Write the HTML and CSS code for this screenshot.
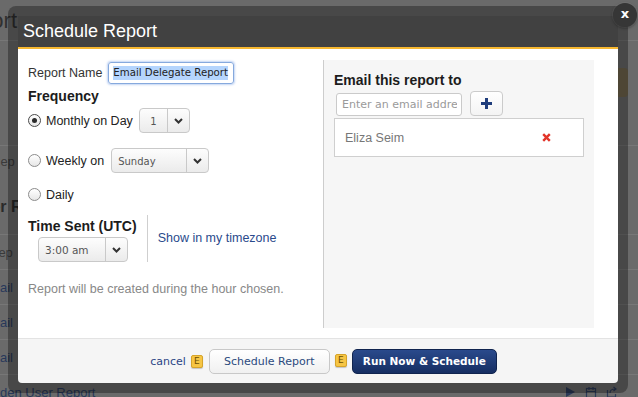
FILE: index.html
```html
<!DOCTYPE html>
<html>
<head>
<meta charset="utf-8">
<title>Schedule Report</title>
<link rel="stylesheet" href="styles.css">
</head>
<body>
<div class="page">
  <div class="p-head"><h1 class="p-title">Report</h1></div>
  <div class="p-bar"><span class="p-btn"></span></div>
  <div class="p-sec">
    <div class="p-sub">Rep</div>
    <h2 class="p-h2">User R</h2>
  </div>
  <div class="p-row"><span class="p-gray">Rep</span></div>
  <div class="p-row"><a class="p-link">Email</a><span class="p-icons"><svg width="12" height="12" viewBox="0 0 12 12"><path d="M2 1 L11 6 L2 11 Z" fill="#2c3a58"/></svg><svg width="12" height="12" viewBox="0 0 12 12"><rect x="1" y="2" width="10" height="9" fill="none" stroke="#2c3a58" stroke-width="1.2"/></svg><svg width="12" height="12" viewBox="0 0 12 12"><rect x="1" y="3" width="9" height="8" fill="none" stroke="#2c3a58" stroke-width="1.2"/></svg></span></div>
  <div class="p-row"><a class="p-link">Email</a><span class="p-icons"><svg width="12" height="12" viewBox="0 0 12 12"><path d="M2 1 L11 6 L2 11 Z" fill="#2c3a58"/></svg><svg width="12" height="12" viewBox="0 0 12 12"><rect x="1" y="2" width="10" height="9" fill="none" stroke="#2c3a58" stroke-width="1.2"/></svg><svg width="12" height="12" viewBox="0 0 12 12"><rect x="1" y="3" width="9" height="8" fill="none" stroke="#2c3a58" stroke-width="1.2"/></svg></span></div>
  <div class="p-row"><a class="p-link">Email</a><span class="p-icons"><svg width="12" height="12" viewBox="0 0 12 12"><path d="M2 1 L11 6 L2 11 Z" fill="#2c3a58"/></svg><svg width="12" height="12" viewBox="0 0 12 12"><rect x="1" y="2" width="10" height="9" fill="none" stroke="#2c3a58" stroke-width="1.2"/></svg><svg width="12" height="12" viewBox="0 0 12 12"><rect x="1" y="3" width="9" height="8" fill="none" stroke="#2c3a58" stroke-width="1.2"/></svg></span></div>
  <div class="p-row"><a class="p-link">Hidden User Report</a><span class="p-icons"><svg width="12" height="12" viewBox="0 0 12 12"><path d="M2 1 L11 6 L2 11 Z" fill="#2c3a58"/></svg><svg width="12" height="12" viewBox="0 0 12 12"><rect x="1.5" y="2.5" width="9" height="9" fill="none" stroke="#2c3a58" stroke-width="1.2"/><path d="M4 1 V4 M8 1 V4 M1.5 5.5 H10.5" stroke="#2c3a58" stroke-width="1.2"/></svg><svg width="12" height="12" viewBox="0 0 12 12"><path d="M1.5 4 V11 H9.5 V8 M4 7 C4 4 6 3 9 3 M7.5 1 L10 3 L7.5 5" fill="none" stroke="#2c3a58" stroke-width="1.2"/></svg></span></div>
</div>

<div class="frame">
  <div class="modal">
    <div class="m-head">Schedule Report</div>
    <div class="m-body">
      <div class="col-left">
        <div class="name-row">
          <span class="lbl">Report Name</span>
          <div class="fake-input"><span class="sel-text">Email Delegate Report</span></div>
        </div>
        <div class="h3">Frequency</div>
        <div class="opt-row">
          <span class="radio checked"></span>
          <span class="opt-text">Monthly on Day</span>
          <div class="select sel-day"><span class="sel-val center">1</span><span class="sel-arrow"><svg width="9" height="6" viewBox="0 0 9 6"><path d="M1 1 L4.5 4.5 L8 1" fill="none" stroke="#333" stroke-width="2"/></svg></span></div>
        </div>
        <div class="opt-row gap">
          <span class="radio"></span>
          <span class="opt-text wk">Weekly on</span>
          <div class="select sel-week"><span class="sel-val">Sunday</span><span class="sel-arrow"><svg width="9" height="6" viewBox="0 0 9 6"><path d="M1 1 L4.5 4.5 L8 1" fill="none" stroke="#333" stroke-width="2"/></svg></span></div>
        </div>
        <div class="opt-row gap daily">
          <span class="radio"></span>
          <span class="opt-text">Daily</span>
        </div>
        <div class="time-sec">
          <div class="time-left">
            <div class="h3">Time Sent (UTC)</div>
            <div class="select sel-time"><span class="sel-val">3:00 am</span><span class="sel-arrow"><svg width="9" height="6" viewBox="0 0 9 6"><path d="M1 1 L4.5 4.5 L8 1" fill="none" stroke="#333" stroke-width="2"/></svg></span></div>
          </div>
          <a class="tz-link">Show in my timezone</a>
        </div>
        <div class="note">Report will be created during the hour chosen.</div>
      </div>
      <div class="col-right">
        <div class="h3">Email this report to</div>
        <div class="add-row">
          <input class="email-input" type="text" placeholder="Enter an email address">
          <span class="plus-btn"><svg width="11" height="11" viewBox="0 0 11 11"><rect x="4" y="0" width="3" height="11" fill="#1f3d7c"/><rect x="0" y="4" width="11" height="3" fill="#1f3d7c"/></svg></span>
        </div>
        <div class="recips">
          <span class="recip-name">Eliza Seim</span>
          <span class="remove"><svg width="9" height="9" viewBox="0 0 9 9"><path d="M1.2 1.2 L7.8 7.8 M7.8 1.2 L1.2 7.8" stroke="#e2352a" stroke-width="2.4"/></svg></span>
        </div>
      </div>
    </div>
    <div class="m-foot">
      <a class="cancel">cancel</a>
      <span class="kbd">E</span>
      <span class="btn btn-light">Schedule Report</span>
      <span class="kbd k2">E</span>
      <span class="btn btn-dark">Run Now &amp; Schedule</span>
    </div>
  </div>
  <div class="close">x</div>
</div>
</body>
</html>
```

FILE: styles.css
```css
* { box-sizing: border-box; }
html, body { margin: 0; padding: 0; }
body {
  width: 638px;
  height: 397px;
  overflow: hidden;
  background: #6a6a6a;
  font-family: "Liberation Sans", Arial, sans-serif;
  font-size: 12.5px;
  color: #222;
  position: relative;
}

/* dimmed page behind */
.page { width: 638px; }
.p-head { height: 41px; border-bottom: 1px solid #777; overflow: hidden; }
.p-title { margin: 0 0 0 -49px; padding-top: 8px; font-size: 22px; line-height: 26px; font-weight: normal; color: #303030; }
.p-bar { height: 105px; border-bottom: 1px solid #777; display: flex; }
.p-btn { margin: 27px 10px 0 auto; width: 70px; height: 29px; border-radius: 4px; background: #73684e; }
.p-sec { height: 88px; overflow: hidden; }
.p-sub { margin: 8px 0 0 -9px; font-size: 13px; line-height: 16px; color: #3a3a3a; }
.p-h2 { margin: 28px 0 0 -29px; font-size: 16px; line-height: 18px; color: #2a2a2a; }
.p-row { height: 35px; border-top: 1px solid #777; display: flex; align-items: center; }
.p-gray { margin-left: -11px; font-size: 13px; color: #3a3a3a; }
.p-link { margin-left: -19.5px; font-size: 13px; color: #28385a; }
.p-icons { margin-left: auto; padding-right: 20px; display: flex; gap: 9px; }

/* modal */
.frame {
  position: absolute;
  left: 8px;
  top: 6px;
  width: 620px;
  height: 387px;
  padding: 10px;
  border-radius: 8px;
  background: rgba(0, 0, 0, 0.32);
}
.modal {
  height: 100%;
  display: flex;
  flex-direction: column;
  border-radius: 0 0 4px 4px;
  overflow: hidden;
}
.m-head {
  height: 33px;
  background: #414141;
  border-bottom: 2px solid #f6b730;
  color: #fff;
  font-size: 18px;
  line-height: 31px;
  padding-left: 5px;
}
.m-body {
  flex: 1;
  background: #fff;
  display: flex;
  padding: 11px 24px 10px 0;
}
.col-left { width: 305px; padding: 2px 10px 0 10px; }
.col-right {
  flex: 1;
  background: #f6f6f6;
  border-left: 1px solid #cdcdcd;
  padding: 12px 10px;
}

.name-row { display: flex; align-items: center; gap: 6px; height: 22px; color: #333; }
.fake-input {
  width: 126px;
  height: 22px;
  border: 1px solid #86a9dd;
  border-radius: 3px;
  box-shadow: 0 0 2px 1px rgba(120, 160, 230, 0.45);
  padding: 0 3px 0 4px;
  display: flex;
  align-items: center;
  font-family: "DejaVu Sans", sans-serif;
  font-size: 10.2px;
  white-space: nowrap;
  overflow: hidden;
}
.sel-text { background: #b5d5fd; color: #222; line-height: 14px; }

.h3 { font-size: 14px; font-weight: bold; line-height: 17px; color: #1c1c1c; }
.col-left > .h3 { margin-top: 4px; }

.opt-row { display: flex; align-items: center; margin-top: 3px; height: 25px; }
.opt-row.gap { margin-top: 15px; }
.opt-row.daily { height: 13px; }
.radio {
  width: 13px;
  height: 13px;
  border-radius: 50%;
  border: 1px solid #8c8c8c;
  background: linear-gradient(#ffffff, #e6e6e6);
  flex: none;
  position: relative;
}
.radio.checked { border: 1.5px solid #4a4a4a; }
.radio.checked::after {
  content: "";
  position: absolute;
  left: 2.5px;
  top: 2.5px;
  width: 5px;
  height: 5px;
  border-radius: 50%;
  background: #2b2b2b;
}
.opt-text { margin-left: 5px; margin-right: 6px; color: #222; }
.opt-text.wk { margin-right: 7px; }

.select {
  height: 25px;
  border: 1px solid #c9c9c9;
  border-radius: 4px;
  background: linear-gradient(#fdfdfd, #ebebeb);
  display: flex;
  font-family: "DejaVu Sans", sans-serif;
  font-size: 10px;
  color: #555;
  flex: none;
}
.sel-day { width: 51px; }
.sel-week { width: 98px; }
.sel-time { width: 90px; margin: 2px 0 0 10px; font-size: 10.5px; }
.sel-val { flex: 1; display: flex; align-items: center; padding-left: 6px; padding-top: 1px; }
.sel-val.center { justify-content: center; padding-left: 0; }
.sel-arrow {
  width: 22px;
  border-left: 1px solid #c9c9c9;
  display: flex;
  align-items: center;
  justify-content: center;
}

.time-sec { display: flex; margin-top: 14px; }
.time-left { border-right: 1px solid #cfcfcf; padding: 3px 10px 0 0; }
.tz-link { padding: 16px 0 0 10px; color: #2a4a8c; line-height: 15px; }
.note { margin-top: 20px; color: #888; line-height: 15px; }

.add-row { display: flex; align-items: flex-end; margin-top: 2px; }
.email-input {
  width: 126px;
  height: 23px;
  margin: 0 0 0 2px;
  border: 1px solid #cacaca;
  border-radius: 3px;
  background: #fff;
  padding: 0 4px 0 5px;
  font-family: "DejaVu Sans", sans-serif;
  font-size: 11px;
  color: #333;
  outline: none;
}
.email-input::placeholder { color: #9a9a9a; }
.plus-btn {
  width: 33px;
  height: 25px;
  margin-left: 8px;
  border: 1px solid #cbcbcb;
  border-radius: 4px;
  background: linear-gradient(#ffffff, #f3f3f3);
  display: flex;
  align-items: center;
  justify-content: center;
}
.recips {
  margin-top: 2px;
  width: 250px;
  height: 39px;
  border: 1px solid #cfcfcf;
  background: #fff;
  display: flex;
  align-items: center;
  padding: 0 32px 0 10px;
}
.recip-name { color: #777; flex: 1; }
.remove { display: flex; }

.m-foot {
  height: 45px;
  background: #f5f5f5;
  border-top: 1px solid #e3e3e3;
  display: flex;
  align-items: center;
  justify-content: center;
  padding-left: 11px;
  font-family: "DejaVu Sans", sans-serif;
  font-size: 11px;
}
.cancel { color: #2b4585; }
.kbd {
  width: 12px;
  height: 13px;
  margin: 0 6px 0 5px;
  background: #f6c544;
  border: 1px solid #d6a42a;
  border-radius: 2px;
  box-shadow: 0 1px 1px rgba(0, 0, 0, 0.2);
  color: #6b4e00;
  font-size: 9px;
  display: flex;
  align-items: center;
  justify-content: center;
}
.kbd.k2 { margin: -2px 5px 0 5px; }
.btn {
  height: 25px;
  border-radius: 5px;
  display: flex;
  align-items: center;
  justify-content: center;
}
.btn-light {
  width: 121px;
  border: 1px solid #c8c8c8;
  background: linear-gradient(#ffffff, #f0f0f0);
  color: #2b4a7e;
}
.btn-dark {
  width: 145px;
  border: 1px solid #10244f;
  background: linear-gradient(#2a4a8c, #162e62);
  color: #fff;
  font-weight: bold;
  font-size: 10.5px;
}

.close {
  position: absolute;
  right: -9px;
  top: -3px;
  width: 24px;
  height: 24px;
  border-radius: 50%;
  background: #363636;
  box-shadow: 0 0 0 1px rgba(255, 255, 255, 0.08), 0 1px 3px rgba(0, 0, 0, 0.5);
  color: #fff;
  font-family: "DejaVu Sans", sans-serif;
  font-weight: bold;
  font-size: 13px;
  line-height: 22px;
  text-align: center;
}
```
